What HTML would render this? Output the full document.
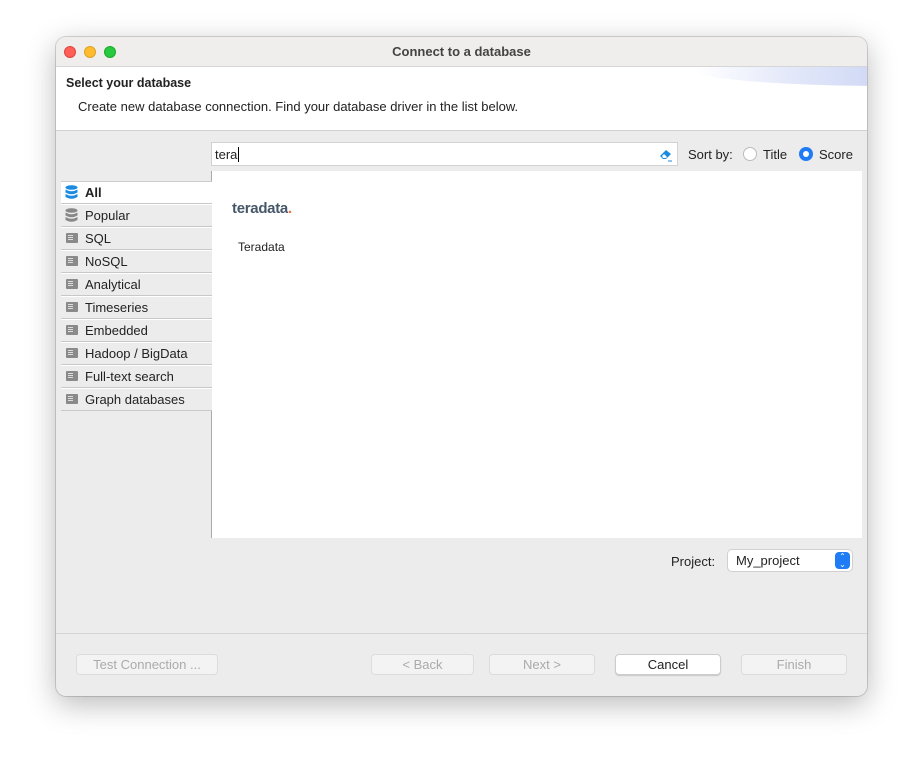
<!DOCTYPE html>
<html><head><meta charset="utf-8"><style>
*{box-sizing:border-box;margin:0;padding:0}
body{width:923px;height:770px;background:#fff;font-family:"Liberation Sans",sans-serif;font-size:13px;color:#222;position:relative;overflow:hidden}
.win{position:absolute;left:56px;top:37px;width:811px;height:659px;border-radius:10px;background:#ececec;box-shadow:0 8px 30px rgba(0,0,0,.28),0 0 0 1px rgba(0,0,0,.15);overflow:hidden}
.tb{position:absolute;left:0;top:0;width:100%;height:30px;background:#efeeec;border-bottom:1px solid #d6d6d6;text-align:center;line-height:29px;font-weight:bold;color:#444;font-size:13px}
.dot{position:absolute;top:9px;width:12px;height:12px;border-radius:50%}
.hdr{position:absolute;left:0;top:30px;width:100%;height:64px;background:#fff;border-bottom:1px solid #d0d0d0;overflow:hidden}
.abs{position:absolute}
.tab{position:absolute;left:5px;width:151px;height:23px;background:#ececec;border-bottom:1px solid #c8c8c8;border-top:1px solid #fff;line-height:21px;padding-left:24px;font-size:13px}
.ic{position:absolute;left:5px;top:5px;width:12px;height:10px;background:#8a8a8a;border-radius:1px}
.ic:after{content:"";position:absolute;left:2px;top:2px;width:5px;height:6px;background:repeating-linear-gradient(#ddd 0 1px,#8a8a8a 1px 2px)}
.btn{position:absolute;top:617px;height:21px;border-radius:4px;background:#f3f3f3;border:1px solid #dcdcdc;text-align:center;line-height:19px;color:#aaa;font-size:13px}
</style></head><body>
<div class="win">
 <div class="tb">Connect to a database
  <div class="dot" style="left:8px;background:#fe5f57;border:1px solid #e0443e"></div>
  <div class="dot" style="left:28px;background:#febc2e;border:1px solid #dea123"></div>
  <div class="dot" style="left:48px;background:#28c840;border:1px solid #1aab29"></div>
 </div>
 <div class="hdr">
  <div class="abs" style="right:-20px;top:-40px;width:200px;height:59px;border-radius:0 0 0 100% / 0 0 0 30%;background:linear-gradient(90deg,rgba(255,255,255,1) 5%,rgba(228,233,250,1) 50%,#cdd6f4)"></div>
  <div class="abs" style="left:10px;top:9px;font-weight:bold;font-size:12.5px">Select your database</div>
  <div class="abs" style="left:22px;top:32px;font-size:13px">Create new database connection. Find your database driver in the list below.</div>
 </div>
 <div class="abs" style="left:155px;top:105px;width:467px;height:24px;background:#fff;border:1px solid #d2d2d2;padding:4px 3px;font-size:13px">tera<span style="border-left:1px solid #000;margin-left:1px"></span>
  <svg class="abs" style="right:3px;top:5px" width="16" height="14" viewBox="0 0 16 14"><path d="M2 8 L8 2 L13 6 L8 11 L5 11 Z" fill="#1a8be0"/><path d="M4 8 L6 6 L9 9 L8 10 L5 10Z" fill="#fff"/><path d="M10 13h4" stroke="#1a8be0"/></svg>
 </div>
 <div class="abs" style="left:632px;top:110px">Sort by:</div>
 <div class="abs" style="left:687px;top:110px;width:14px;height:14px;border-radius:50%;border:1px solid #bbb;background:#fff"></div>
 <div class="abs" style="left:707px;top:110px">Title</div>
 <div class="abs" style="left:743px;top:110px;width:14px;height:14px;border-radius:50%;background:#1f7cf5"><div class="abs" style="left:4px;top:4px;width:6px;height:6px;border-radius:50%;background:#fff"></div></div>
 <div class="abs" style="left:763px;top:110px">Score</div>
 <div class="abs" style="left:155px;top:134px;width:651px;height:367px;background:#fff;border-left:1px solid #aaa"></div>
 <div class="abs" style="left:176px;top:163px;font-weight:bold;font-size:15px;color:#46576a;letter-spacing:-.3px">teradata<span style="color:#f37440">.</span></div>
 <div class="abs" style="left:182px;top:203px;font-size:12px">Teradata</div>
 <div class="tab" style="top:144px;background:#fff;font-weight:bold;border-top:1px solid #ccc"><svg class="abs" style="left:4px;top:3px" width="13" height="15" viewBox="0 0 13 15"><g fill="#1a8be0"><ellipse cx="6.5" cy="2.5" rx="6" ry="2.3"/><path d="M.5 4.5q6 3.5 12 0v3q-6 3.5-12 0z"/><path d="M.5 9q6 3.5 12 0v3q-6 3.5-12 0z"/></g></svg>All</div>
 <div class="tab" style="top:167px"><svg class="abs" style="left:4px;top:3px" width="13" height="15" viewBox="0 0 13 15"><g fill="#888"><ellipse cx="6.5" cy="2.5" rx="6" ry="2.3"/><path d="M.5 4.5q6 3.5 12 0v3q-6 3.5-12 0z"/><path d="M.5 9q6 3.5 12 0v3q-6 3.5-12 0z"/></g></svg>Popular</div>
 <div class="tab" style="top:190px"><i class="ic"></i>SQL</div>
 <div class="tab" style="top:213px"><i class="ic"></i>NoSQL</div>
 <div class="tab" style="top:236px"><i class="ic"></i>Analytical</div>
 <div class="tab" style="top:259px"><i class="ic"></i>Timeseries</div>
 <div class="tab" style="top:282px"><i class="ic"></i>Embedded</div>
 <div class="tab" style="top:305px"><i class="ic"></i>Hadoop / BigData</div>
 <div class="tab" style="top:328px"><i class="ic"></i>Full-text search</div>
 <div class="tab" style="top:351px"><i class="ic"></i>Graph databases</div>
 <div class="abs" style="left:615px;top:517px">Project:</div>
 <div class="abs" style="left:672px;top:513px;width:124px;height:21px;background:#fff;border-radius:4px;box-shadow:0 0 0 1px #d0d0d0;padding:3px 8px;font-size:13px">My_project
  <div class="abs" style="right:2px;top:2px;width:15px;height:17px;border-radius:4px;background:#1f7cf5;color:#fff;font-size:8px;line-height:8px;text-align:center;padding-top:1px">⌃<br>⌄</div></div>
 <div class="abs" style="left:0;top:596px;width:100%;border-top:1px solid #d4d4d4"></div>
 <div class="btn" style="left:20px;width:142px">Test Connection ...</div>
 <div class="btn" style="left:315px;width:103px">&lt; Back</div>
 <div class="btn" style="left:433px;width:106px">Next &gt;</div>
 <div class="btn" style="left:559px;width:106px;background:#fff;color:#222;border-color:#ccc;box-shadow:0 1px 1px rgba(0,0,0,.15)">Cancel</div>
 <div class="btn" style="left:685px;width:106px">Finish</div>
</div>
</body></html>
